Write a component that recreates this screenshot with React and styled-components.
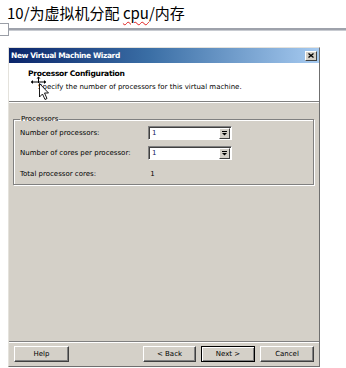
import React from 'react';
import styled, { createGlobalStyle } from 'styled-components';

const Global = createGlobalStyle`
  html, body { margin: 0; padding: 0; background: #fff; }
  body { width: 346px; height: 368px; overflow: hidden; font-family: "Liberation Sans", Arial, sans-serif; }
`;

const Page = styled.div`
  position: relative;
  width: 346px;
  height: 368px;
  overflow: hidden;
  background: #fff;
`;

const DocText = styled.div`
  height: 22px;
  padding: 3px 0 0 7px;
  box-sizing: border-box;
  font-family: "Noto Sans CJK SC", "Noto Sans", sans-serif;
  font-size: 15px;
  line-height: 19px;
  color: #000;
  white-space: nowrap;
`;

const Spell = styled.span`
  text-decoration: underline wavy #e02020;
  text-decoration-thickness: 1px;
  text-underline-offset: 2px;
`;

const Ruler = styled.div`
  position: relative;
  height: 14px;
  display: flex;
  align-items: center;
`;

const RulerLine = styled.div`
  flex: 1;
  height: 2px;
  background: #9ea2ab;
  border-bottom: 1px solid #c8cbd1;
`;

const RulerMark = styled.div`
  position: absolute;
  left: -4px;
  top: 1px;
  width: 11px;
  height: 11px;
  border: 1px solid #9a9ea6;
  background: #fff;
`;

const Dialog = styled.div`
  margin: 11px 0 0 8px;
  width: 312px;
  height: 320px;
  box-sizing: border-box;
  border: 1px solid;
  border-color: #e4e2dc #6f6f6f #6f6f6f #e4e2dc;
  background: #d4d0c8;
  display: flex;
  flex-direction: column;
`;

const TitleBar = styled.div`
  height: 15px;
  display: flex;
  align-items: center;
  justify-content: space-between;
  padding: 0 2px 0 2px;
  background: linear-gradient(to right, #0a246a 0%, #3a6ea5 45%, #a6caf0 100%);
`;

const TitleText = styled.span`
  color: #fff;
  font-family: "DejaVu Sans", Verdana, sans-serif;
  font-weight: bold;
  font-size: 7.5px;
  letter-spacing: -0.4px;
  white-space: nowrap;
`;

const CloseBtn = styled.div`
  width: 12px;
  height: 10px;
  box-sizing: border-box;
  background: #d4d0c8;
  border: 1px solid;
  border-color: #fff #404040 #404040 #fff;
  display: flex;
  align-items: center;
  justify-content: center;
`;

const Header = styled.div`
  position: relative;
  height: 38px;
  background: #fff;
  padding: 6px 0 0 19px;
  box-sizing: border-box;
`;

const HeadTitle = styled.div`
  font-family: "DejaVu Sans", Verdana, sans-serif;
  font-weight: bold;
  font-size: 7.6px;
  letter-spacing: -0.3px;
  line-height: 10px;
  color: #000;
`;

const HeadSub = styled.div`
  margin: 3px 0 0 10px;
  font-family: "DejaVu Sans", Verdana, sans-serif;
  font-size: 7px;
  line-height: 10px;
  color: #000;
  white-space: nowrap;
`;

const Cursor = styled.svg`
  position: absolute;
  left: 21px;
  top: 13px;
`;

const Etched = styled.div`
  height: 1px;
  background: #808080;
  border-bottom: 1px solid #fff;
`;

const Body = styled.div`
  flex: 1;
  padding: 12px 5px 0 4px;
`;

const Group = styled.fieldset`
  margin: 0;
  padding: 3px 6px 6px 6px;
  border: 1px solid #808080;
  box-shadow: inset 1px 1px 0 #fff, 1px 1px 0 #fff;
  display: grid;
  grid-template-columns: 128px 84px;
  row-gap: 6px;
  align-items: center;
`;

const Legend = styled.legend`
  padding: 0 1px;
  margin-left: 0;
  font-family: "DejaVu Sans", Verdana, sans-serif;
  font-size: 7px;
  color: #000;
`;

const Label = styled.div`
  font-family: "DejaVu Sans", Verdana, sans-serif;
  font-size: 7px;
  color: #000;
  white-space: nowrap;
  margin-top: ${p => p.$mt || 0}px;
`;

const Combo = styled.div`
  height: 14px;
  box-sizing: border-box;
  border: 1px solid;
  border-color: #808080 #fff #fff #808080;
  box-shadow: inset 1px 1px 0 #404040;
  background: #fff;
  display: flex;
  align-items: stretch;
  padding: 1px 1px 0 1px;
`;

const ComboValue = styled.div`
  flex: 1;
  font-family: "DejaVu Sans", Verdana, sans-serif;
  font-size: 7px;
  line-height: 11px;
  padding-left: 2px;
  color: #102060;
`;

const ComboArrow = styled.div`
  width: 11px;
  box-sizing: border-box;
  background: #d4d0c8;
  border: 1px solid;
  border-color: #fff #404040 #404040 #fff;
  display: flex;
  align-items: center;
  justify-content: center;
`;

const Footer = styled.div`
  display: flex;
  align-items: center;
  padding: 3px 4px 4px 4px;
  gap: 5px;
`;

const Button = styled.div`
  width: ${p => p.$w}px;
  height: 16px;
  box-sizing: border-box;
  background: #d4d0c8;
  border: 1px solid;
  border-color: ${p => (p.$default ? '#000' : '#fff #404040 #404040 #fff')};
  box-shadow: ${p => (p.$default ? 'inset 1px 1px 0 #fff, inset -1px -1px 0 #808080' : 'inset -1px -1px 0 #808080')};
  display: flex;
  align-items: center;
  justify-content: center;
  font-family: "DejaVu Sans", Verdana, sans-serif;
  font-size: 7px;
  color: #000;
  margin-left: ${p => p.$ml || 0}px;
`;

function DownArrow() {
  return (
    <svg width="7" height="5" viewBox="0 0 7 5">
      <rect x="1" y="0" width="5" height="1" fill="#000" />
      <path d="M1 2 L6 2 L3.5 4.5 Z" fill="#000" />
    </svg>
  );
}

export default function App() {
  return (
    <>
      <Global />
      <Page>
        <DocText>
          10/为虚拟机分配 <Spell>cpu</Spell>/内存
        </DocText>
        <Ruler>
          <RulerMark />
          <RulerLine />
        </Ruler>
        <Dialog>
          <TitleBar>
            <TitleText>New Virtual Machine Wizard</TitleText>
            <CloseBtn>
              <svg width="6" height="5" viewBox="0 0 6 5">
                <path d="M0.5 0.5 L5.5 4.5 M5.5 0.5 L0.5 4.5" stroke="#000" strokeWidth="1.3" />
              </svg>
            </CloseBtn>
          </TitleBar>
          <Header>
            <HeadTitle>Processor Configuration</HeadTitle>
            <HeadSub>Specify the number of processors for this virtual machine.</HeadSub>
            <Cursor width="22" height="28" viewBox="0 0 22 28">
              <path d="M1 6 L16 6 M8.5 1 L8.5 7" stroke="#000" strokeWidth="1" fill="none" />
              <path d="M1 6 L3 4 L3 8 Z M16 6 L14 4 L14 8 Z M8.5 0.5 L6.5 2.5 L10.5 2.5 Z" fill="#000" />
              <path d="M9.5 7.5 L9.5 21 L12.5 18 L15 23.5 L17 22.5 L14.5 17 L18.5 17 Z" fill="#fff" stroke="#000" strokeWidth="0.9" strokeLinejoin="miter" />
            </Cursor>
          </Header>
          <Etched />
          <Body>
            <Group>
              <Legend>Processors</Legend>
              <Label>Number of processors:</Label>
              <Combo>
                <ComboValue>1</ComboValue>
                <ComboArrow><DownArrow /></ComboArrow>
              </Combo>
              <Label>Number of cores per processor:</Label>
              <Combo>
                <ComboValue>1</ComboValue>
                <ComboArrow><DownArrow /></ComboArrow>
              </Combo>
              <Label $mt={4}>Total processor cores:</Label>
              <Label $mt={4}>&nbsp;1</Label>
            </Group>
          </Body>
          <Etched />
          <Footer>
            <Button $w={55} $ml={1}>Help</Button>
            <Button $w={53} $ml={69}>&lt; Back</Button>
            <Button $w={54} $default>Next &gt;</Button>
            <Button $w={54}>Cancel</Button>
          </Footer>
        </Dialog>
      </Page>
    </>
  );
}
